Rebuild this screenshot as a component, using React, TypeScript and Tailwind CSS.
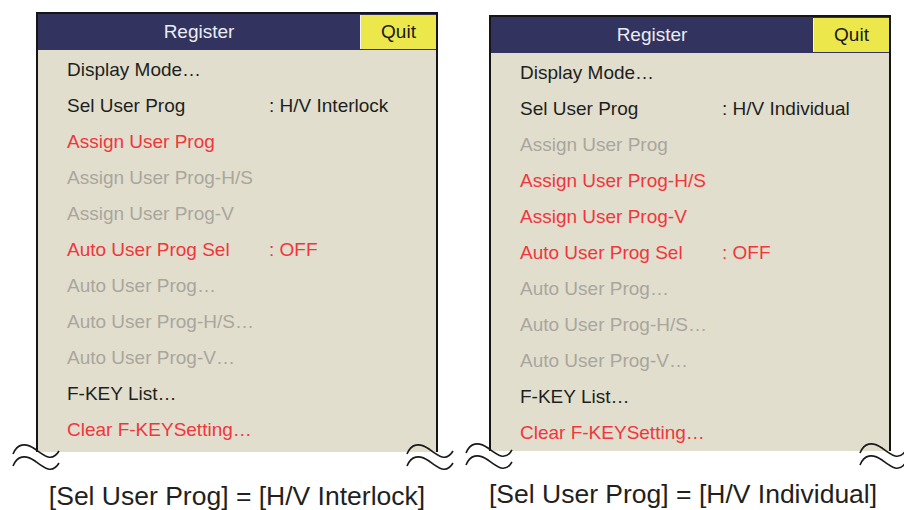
import React from 'react';

type Tone = 'black' | 'red' | 'gray';

type Item = { label: string; value?: string; tone: Tone };

const toneClass: Record<Tone, string> = {
  black: 'text-[#1e1e1e]',
  red: 'text-[#f0363d]',
  gray: 'text-[#a9a69d]',
};

const interlock: Item[] = [
  { label: 'Display Mode…', tone: 'black' },
  { label: 'Sel User Prog', value: ': H/V Interlock', tone: 'black' },
  { label: 'Assign User Prog', tone: 'red' },
  { label: 'Assign User Prog-H/S', tone: 'gray' },
  { label: 'Assign User Prog-V', tone: 'gray' },
  { label: 'Auto User Prog Sel', value: ': OFF', tone: 'red' },
  { label: 'Auto User Prog…', tone: 'gray' },
  { label: 'Auto User Prog-H/S…', tone: 'gray' },
  { label: 'Auto User Prog-V…', tone: 'gray' },
  { label: 'F-KEY List…', tone: 'black' },
  { label: 'Clear F-KEYSetting…', tone: 'red' },
];

const individual: Item[] = [
  { label: 'Display Mode…', tone: 'black' },
  { label: 'Sel User Prog', value: ': H/V Individual', tone: 'black' },
  { label: 'Assign User Prog', tone: 'gray' },
  { label: 'Assign User Prog-H/S', tone: 'red' },
  { label: 'Assign User Prog-V', tone: 'red' },
  { label: 'Auto User Prog Sel', value: ': OFF', tone: 'red' },
  { label: 'Auto User Prog…', tone: 'gray' },
  { label: 'Auto User Prog-H/S…', tone: 'gray' },
  { label: 'Auto User Prog-V…', tone: 'gray' },
  { label: 'F-KEY List…', tone: 'black' },
  { label: 'Clear F-KEYSetting…', tone: 'red' },
];

// break mark: two parallel wavy strokes
function Wave({ className }: { className: string }) {
  return (
    <svg className={className} width="48" height="34" viewBox="0 0 48 34" fill="none">
      <path d="M1 11 C5 1, 13 -1, 23 6 C31 12, 40 20, 47 8" stroke="#1a1a1a" strokeWidth="1.6" />
      <path d="M1 23 C5 13, 13 11, 23 18 C31 24, 40 32, 47 20" stroke="#1a1a1a" strokeWidth="1.6" />
    </svg>
  );
}

function Panel({ items, bottomPad }: { items: Item[]; bottomPad: string }) {
  return (
    <div className="relative w-[402px] border-x-2 border-t-2 border-[#151515]">
      <div className="flex h-[36px] bg-[#32335f]">
        <div className="flex flex-1 items-center justify-center text-[19px] text-[#ececf2]">Register</div>
        <div className="mt-[1px] mb-[1px] flex w-[76px] items-center justify-center border-l border-[#f4f4f4] bg-[#ece84b] text-[19px] text-[#1a1a1a]">
          Quit
        </div>
      </div>
      <div className={`bg-[#e1decd] pt-[2px] ${bottomPad}`}>
        {items.map((it) => (
          <div key={it.label} className={`flex h-[36px] items-center pl-[29px] text-[19px] ${toneClass[it.tone]}`}>
            <span className="w-[202px] whitespace-nowrap">{it.label}</span>
            {it.value && <span className="whitespace-nowrap">{it.value}</span>}
          </div>
        ))}
      </div>
      <Wave className="absolute -left-[26px] top-[calc(100%-9px)]" />
      <Wave className="absolute -right-[18px] top-[calc(100%-9px)]" />
    </div>
  );
}

export default function App() {
  return (
    <div
      className="h-[510px] w-[904px] overflow-hidden bg-white"
      style={{ fontFamily: '"Liberation Sans", Arial, sans-serif' }}
    >
      <div className="flex gap-[51px] pl-[36px] pt-[12px]">
        <div className="flex flex-col">
          <Panel items={interlock} bottomPad="pb-[4px]" />
          <div className="mt-[29px] text-center text-[26.5px] leading-[30px] text-[#231f20]">
            [Sel User Prog] = [H/V Interlock]
          </div>
        </div>
        <div className="mt-[3px] flex flex-col">
          <Panel items={individual} bottomPad="pb-0" />
          <div className="mt-[28px] pr-[14px] text-center text-[26.5px] leading-[30px] text-[#231f20] whitespace-nowrap">
            [Sel User Prog] = [H/V Individual]
          </div>
        </div>
      </div>
    </div>
  );
}
